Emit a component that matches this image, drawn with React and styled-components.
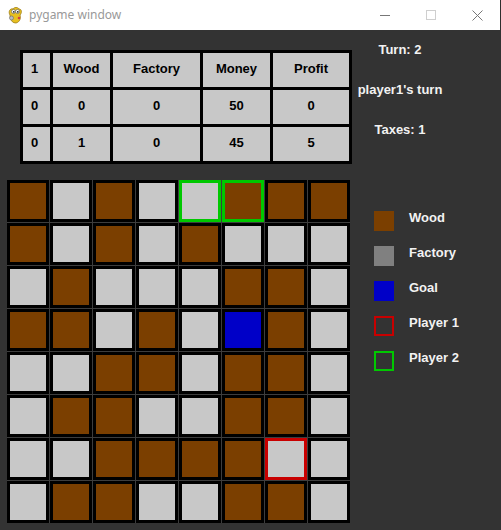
import React from "react";
import styled, { createGlobalStyle } from "styled-components";

const Global = createGlobalStyle`
  html, body { margin: 0; padding: 0; background: #333333; }
  #root { width: 501px; height: 530px; }
`;

const Window = styled.div`
  width: 501px;
  height: 530px;
  background: #333333;
  overflow: hidden;
  font-family: "Liberation Sans", Arial, sans-serif;
`;

const TitleBar = styled.div`
  height: 30px;
  width: 500px;
  background: #ffffff;
  display: flex;
  align-items: center;
  border-right: 1px solid #2e2e2e;
`;

const AppIcon = styled.div`
  width: 16px;
  height: 18px;
  margin-left: 7px;
  display: flex;
`;

const Title = styled.span`
  margin-left: 6px;
  font-family: "Noto Sans", "Open Sans", sans-serif;
  font-size: 12px;
  color: #999999;
  flex: 1;
  padding-bottom: 1px;
`;

const WinButton = styled.div`
  width: 46px;
  height: 30px;
  display: flex;
  align-items: center;
  justify-content: center;
`;

const TopRow = styled.div`
  display: flex;
  align-items: flex-start;
  padding: 10px 0 0 20px;
`;

const StatsTable = styled.div`
  margin-top: 10px;
  display: grid;
  grid-template-columns: 27px 57px 87px 67px 76px;
  grid-auto-rows: 34px;
  gap: 3px;
  padding: 3px;
  background: #000000;
`;

const StatCell = styled.div`
  background: #c8c8c8;
  color: #000000;
  font-weight: bold;
  font-size: 13px;
  line-height: 16px;
  display: flex;
  align-items: center;
  justify-content: ${(p) => (p.$first ? "flex-start" : "center")};
  padding-left: ${(p) => (p.$first ? "8px" : "0")};
  padding-bottom: 3px;
  box-sizing: border-box;
`;

const InfoPanel = styled.div`
  width: 96px;
  margin-top: 1px;
  display: flex;
  flex-direction: column;
  align-items: center;
  gap: 22px;
`;

const InfoText = styled.div`
  color: #f2f2f2;
  font-weight: bold;
  font-size: 13px;
  line-height: 18px;
  white-space: nowrap;
`;

const BottomRow = styled.div`
  display: flex;
  align-items: flex-start;
  margin-top: 16px;
  padding-left: 7px;
`;

const Board = styled.div`
  display: grid;
  grid-template-columns: repeat(8, 42px);
  grid-auto-rows: 42px;
  gap: 1px;
  background: #3d3d3d;
`;

const colors = {
  B: "#7b3f00",
  E: "#c8c8c8",
  G: "#0000c8",
};

const Tile = styled.div`
  box-sizing: border-box;
  border: 3px solid ${(p) => p.$outline || "#000000"};
  background: ${(p) => colors[p.$kind]};
`;

const Legend = styled.div`
  margin-left: 24px;
  margin-top: 31px;
  display: flex;
  flex-direction: column;
  gap: 15px;
`;

const LegendRow = styled.div`
  display: flex;
  align-items: flex-start;
  gap: 15px;
`;

const Swatch = styled.div`
  width: 20px;
  height: 20px;
  box-sizing: border-box;
  background: ${(p) => p.$fill || "transparent"};
  border: ${(p) => (p.$stroke ? `2px solid ${p.$stroke}` : "none")};
`;

const LegendLabel = styled.div`
  margin-top: -1px;
  color: #f2f2f2;
  font-weight: bold;
  font-size: 13px;
  line-height: 16px;
`;

const table = [
  ["1", "Wood", "Factory", "Money", "Profit"],
  ["0", "0", "0", "50", "0"],
  ["0", "1", "0", "45", "5"],
];

const board = [
  "BEBEEBBB",
  "BEBEBEEE",
  "EBEEEBBE",
  "BBEBEGBE",
  "EEBBEBBE",
  "EBBEEBBE",
  "EEBBBBEE",
  "EBBEEBBE",
];

const outlines = {
  "0-4": "#00c800",
  "0-5": "#00c800",
  "6-6": "#c80000",
};

const legend = [
  { label: "Wood", fill: "#7b3f00" },
  { label: "Factory", fill: "#808080" },
  { label: "Goal", fill: "#0000c8" },
  { label: "Player 1", stroke: "#c80000" },
  { label: "Player 2", stroke: "#00c800" },
];

function PygameIcon() {
  return (
    <svg width="16" height="18" viewBox="0 0 16 18">
      <path d="M3 9 C1 6 3 2 6 3 C7 1 11 1 12 3 C15 3 15 7 13 9 C14 12 13 16 9 17 C6 17 4 15 4 13 C3 12 3 10 3 9 Z" fill="#e8c020" stroke="#9a7a10" strokeWidth="0.8" />
      <circle cx="6.5" cy="5.5" r="2" fill="#ffffff" stroke="#555" strokeWidth="0.6" />
      <circle cx="10.5" cy="5.5" r="2" fill="#ffffff" stroke="#555" strokeWidth="0.6" />
      <circle cx="6.8" cy="5.8" r="0.9" fill="#222" />
      <circle cx="10.8" cy="5.8" r="0.9" fill="#222" />
      <circle cx="4.5" cy="12" r="2" fill="#bdbdbd" stroke="#666" strokeWidth="0.6" />
      <circle cx="12" cy="12" r="1.3" fill="#d04040" />
    </svg>
  );
}

export default function App() {
  return (
    <>
      <Global />
      <Window>
        <TitleBar>
          <AppIcon>
            <PygameIcon />
          </AppIcon>
          <Title>pygame window</Title>
          <WinButton>
            <svg width="10" height="10" viewBox="0 0 10 10">
              <line x1="0" y1="5.5" x2="10" y2="5.5" stroke="#777" strokeWidth="1" />
            </svg>
          </WinButton>
          <WinButton>
            <svg width="10" height="10" viewBox="0 0 10 10">
              <rect x="0.5" y="0.5" width="9" height="9" fill="none" stroke="#cfcfcf" strokeWidth="1" />
            </svg>
          </WinButton>
          <WinButton>
            <svg width="11" height="11" viewBox="0 0 11 11">
              <path d="M0.5 0.5 L10.5 10.5 M10.5 0.5 L0.5 10.5" stroke="#777" strokeWidth="1" />
            </svg>
          </WinButton>
        </TitleBar>

        <TopRow>
          <StatsTable>
            {table.map((row, r) =>
              row.map((v, c) => (
                <StatCell key={`${r}-${c}`} $first={c === 0}>
                  {v}
                </StatCell>
              ))
            )}
          </StatsTable>
          <InfoPanel>
            <InfoText>Turn: 2</InfoText>
            <InfoText>player1's turn</InfoText>
            <InfoText>Taxes: 1</InfoText>
          </InfoPanel>
        </TopRow>

        <BottomRow>
          <Board>
            {board.map((row, r) =>
              row.split("").map((k, c) => (
                <Tile key={`${r}-${c}`} $kind={k} $outline={outlines[`${r}-${c}`]} />
              ))
            )}
          </Board>
          <Legend>
            {legend.map((l) => (
              <LegendRow key={l.label}>
                <Swatch $fill={l.fill} $stroke={l.stroke} />
                <LegendLabel>{l.label}</LegendLabel>
              </LegendRow>
            ))}
          </Legend>
        </BottomRow>
      </Window>
    </>
  );
}
